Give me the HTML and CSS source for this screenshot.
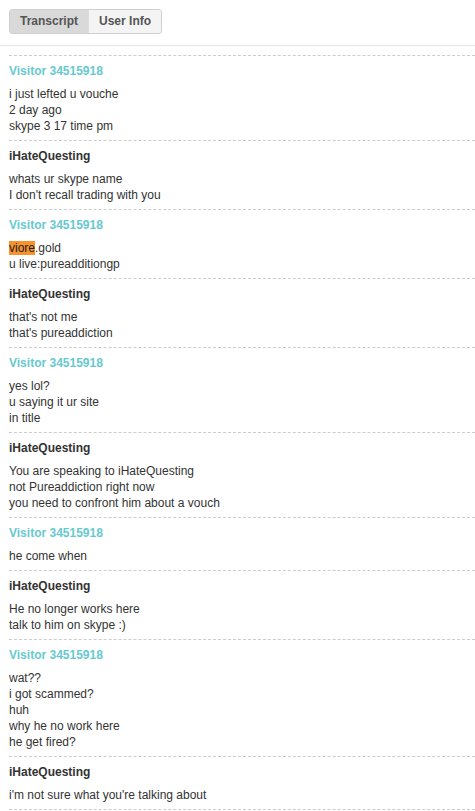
FILE: index.html
```html
<!DOCTYPE html>
<html>
<head>
    <title>Transcript</title>
    <link rel="stylesheet" href="styles.css">
</head>
<body>
    <!-- tabs on top -->
    <div class="tab-bar">
        <div class="tabs">
            <span class="tab active">Transcript</span>
            <span class="tab">User Info</span>
        </div>
    </div>

    <!-- chat transcript -->
    <div class="transcript">
        <div class="msg">
            <div class="name visitor">Visitor 34515918</div>
            <div class="text">i just lefted u vouche<br>2 day ago<br>skype 3 17 time pm</div>
        </div>
        <div class="msg">
            <div class="name">iHateQuesting</div>
            <div class="text">whats ur skype name<br>I don't recall trading with you</div>
        </div>
        <div class="msg">
            <div class="name visitor">Visitor 34515918</div>
            <div class="text"><span class="hl">viore</span>.gold<br>u live:pureadditiongp</div>
        </div>
        <div class="msg">
            <div class="name">iHateQuesting</div>
            <div class="text">that's not me<br>that's pureaddiction</div>
        </div>
        <div class="msg">
            <div class="name visitor">Visitor 34515918</div>
            <div class="text">yes lol?<br>u saying it ur site<br>in title</div>
        </div>
        <div class="msg">
            <div class="name">iHateQuesting</div>
            <div class="text">You are speaking to iHateQuesting<br>not Pureaddiction right now<br>you need to confront him about a vouch</div>
        </div>
        <div class="msg">
            <div class="name visitor">Visitor 34515918</div>
            <div class="text">he come when</div>
        </div>
        <div class="msg">
            <div class="name">iHateQuesting</div>
            <div class="text">He no longer works here<br>talk to him on skype :)</div>
        </div>
        <div class="msg">
            <div class="name visitor">Visitor 34515918</div>
            <div class="text">wat??<br>i got scammed?<br>huh<br>why he no work here<br>he get fired?</div>
        </div>
        <div class="msg">
            <div class="name">iHateQuesting</div>
            <div class="text">i'm not sure what you're talking about</div>
        </div>
        <div class="msg"></div>
    </div>
</body>
</html>
```

FILE: styles.css
```css
body {
    margin: 0;
    font-family: "Liberation Sans", Arial, sans-serif;
    font-size: 12px;
    color: #333;
    background: #fff;
}

/* header with the two tabs */
.tab-bar {
    padding: 9px 9px 11px;
    border-bottom: 1px solid #e3e3e3;
}

.tabs {
    display: inline-flex;
    border: 1px solid #cfcfcf;
    border-radius: 3px;
    overflow: hidden;
}

.tab {
    height: 23px;
    line-height: 23px;
    padding: 0 10px;
    font-weight: bold;
    color: #555;
    background: #f4f4f4;
}

.tab + .tab {
    border-left: 1px solid #dcdcdc;
}

.tab.active {
    background: #d9d9d9;
}

/* message list */
.transcript {
    margin: 9px 0 0 9px;
}

.msg {
    border-top: 1px dashed #cccccc;
    padding: 7px 0 6px;
}

.name {
    font-weight: bold;
    line-height: 16px;
    margin-bottom: 7px;
}

.name.visitor {
    color: #66c9cf;
}

.text {
    line-height: 16px;
}

.hl {
    background: #f7922d;
    color: #222;
}
```
